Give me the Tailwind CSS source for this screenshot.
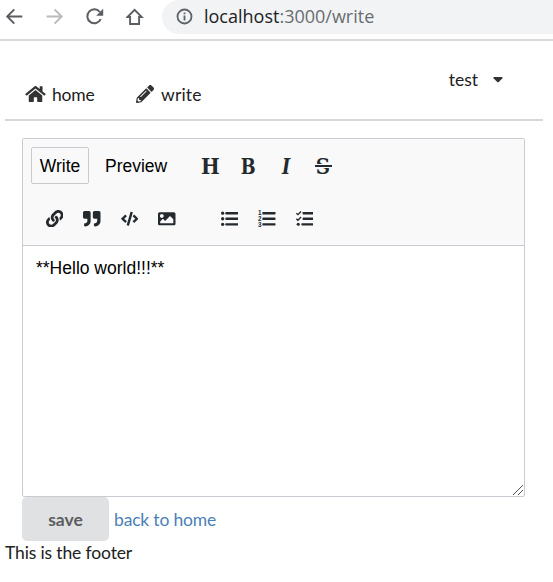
<!DOCTYPE html>
<html lang="en">
<head>
<meta charset="utf-8">
<title>write</title>
<script src="https://cdn.jsdelivr.net/npm/@tailwindcss/browser@4"></script>
</head>
<body class="bg-white w-[553px] h-[582px] overflow-hidden font-[Lato,sans-serif] text-[17.5px] leading-[25px] text-[#212121]">
<div class="flex h-[41px] items-start border-b-2 border-[#d9dadb]">
  <div class="flex w-[162px] shrink-0 h-[33px] text-[#5a5d61]">
    <svg class="w-[18px] h-[18px] mt-2 ml-[5px]" viewBox="0 0 18 18" fill="none" stroke="currentColor" stroke-width="1.9"><path d="M17.3 8.5H2.5M9.3 1.3L2.2 8.5l7.1 7.2"/></svg>
    <svg class="w-[18px] h-[18px] mt-2 ml-[23px] text-[#b9babc]" viewBox="0 0 18 18" fill="none" stroke="currentColor" stroke-width="1.9"><path d="M.6 8.5h14.8M8.6 1.3l7.1 7.2-7.1 7.2"/></svg>
    <svg class="w-[20px] h-[18px] mt-2 ml-[21px]" viewBox="0 0 20 18" fill="none" stroke="currentColor" stroke-width="2"><path d="M15.7 11.2a7 7 0 1 1-.9-7.2"/><path d="M18.2.8v7h-7z" fill="currentColor" stroke="none"/></svg>
    <svg class="w-[18px] h-[18px] mt-2 ml-[21px]" viewBox="0 0 18 18" fill="none" stroke="currentColor" stroke-width="1.9"><path d="M1.5 9L8.6 1.8 15.700 9h-2.600v7H4.100V9z"/></svg>
  </div>
  <div class="flex h-[34px] grow items-start rounded-l-full bg-[#f1f3f4]">
    <svg class="w-[17px] h-[17px] mt-2 ml-[14px] text-[#5f6368]" viewBox="0 0 17 17" fill="none" stroke="currentColor" stroke-width="1.8"><circle cx="8.5" cy="8.5" r="7"/><path d="M8.5 7.4v5M8.5 4.4v1.8"/></svg>
    <div class="ml-[11px] mt-[4px] whitespace-nowrap font-['Open_Sans',sans-serif] text-[18px] text-[#6a6d71]"><span class="text-[#202124]">localhost</span>:3000/write</div>
  </div>
</div>
<div class="ml-[5px] flex h-[80px] w-[538px] border-b-[2px] border-[#d6d7d8]">
  <div class="ml-[20px] mt-[41px] flex h-[25px] w-[110px]">
    <svg class="w-[21px] h-[18px] mt-[3px] text-[#333]" viewBox="0 0 576 512" fill="currentColor"><path d="M280 148L96 300v164c0 9 7 16 16 16h112c9 0 16-7 16-16v-97c0-9 7-16 16-16h64c9 0 16 7 16 16v97c0 9 7 16 16 16h112c9 0 16-7 16-16V300L296 148c-5-4-11-4-16 0zm292 103l-84-69V44c0-7-5-12-12-12h-56c-7 0-12 5-12 12v72l-90-74c-18-15-43-15-61 0L4 251c-5 4-6 12-1 17l25 31c5 5 12 6 17 2l235-194c5-4 11-4 16 0l236 194c5 4 12 3 17-2l25-31c4-5 3-13-2-17z"/></svg>
    <span class="ml-[6px] tracking-[-0.2px]">home</span>
  </div>
  <div class="mt-[41px] flex h-[25px] w-[120px]">
    <svg class="ml-px w-[18px] h-[18px] mt-[3px] text-[#333]" viewBox="0 0 512 512" fill="currentColor"><path fill-rule="evenodd" d="M498 142l-47 47c-4 4-12 4-16 0L324 78c-5-5-5-12 0-17l47-47c18-18 49-18 68 0l60 60c18 18 18 49-1 68zM284 101L22 364 0 485c-3 16 11 30 27 27l122-21 262-263c5-5 5-12 0-17L301 101c-5-5-12-5-17 0zM124 340c-5-5-5-13 0-18l154-154c5-5 13-5 18 0s5 13 0 18L142 340c-5 5-13 5-18 0zM88 424h48v36l-64 11-31-31 11-64h36z"/></svg>
    <span class="ml-[7px] tracking-[0.15px]">write</span>
  </div>
  <div class="ml-auto mr-[40px] mt-[26px] flex h-[25px]"><span>test</span>
    <svg class="ml-[15px] mt-[10px] w-[10px] h-[6px]" viewBox="0 0 10 6" fill="#333"><path d="M1 0h8q1 .3.4 1.2L5.8 5q-.8.7-1.6 0L.6 1.200Q0 .3 1 0z"/></svg>
  </div>
</div>
<div class="ml-[22px] mt-[17px] w-[503px] h-[359px] rounded-[2px] border border-[#c8ccd0] font-['Liberation_Sans',sans-serif]">
  <div class="h-[107px] border-b border-[#c8ccd0] bg-[#f9f9f9] text-[#24292e]">
    <div class="flex h-[53px] pt-[8px] pl-[8px]">
      <div class="flex h-[37px] w-[58px] items-center justify-center rounded-[2px] border border-[#c8ccd0] pt-[2px] text-[17.5px] text-black">Write</div>
      <div class="ml-[16px] flex h-[37px] w-[63px] items-center whitespace-nowrap pt-[2px] text-[17.5px] text-black">Preview</div>
      <div class="ml-[24px] flex h-[37px] items-center pt-px font-['DejaVu_Serif',serif] text-[22px] font-bold">
        <span class="flex w-[37.5px] justify-center"><span class="inline-block scale-x-90">H</span></span>
        <span class="flex w-[37.5px] justify-center"><span class="inline-block scale-x-80">B</span></span>
        <span class="flex w-[37.5px] justify-center"><span class="inline-block scale-x-80 italic">I</span></span>
        <span class="relative flex w-[37.5px] justify-center"><span class="inline-block scale-x-90">S</span><span class="absolute left-[10px] top-[10.5px] h-[4px] w-[17px] border-y border-[#f9f9f9] bg-[#24292e]"></span></span>
      </div>
    </div>
    <div class="flex h-[53px] items-start pl-[22.5px] pt-[17.5px]">
      <svg class="size-[17.5px]" viewBox="0 0 512 512" fill="currentColor"><path d="M326.612 185.391c59.747 59.809 58.927 155.698.36 214.590-.11.120-.24.250-.36.370l-67.200 67.200c-59.270 59.270-155.699 59.262-214.960 0-59.270-59.260-59.270-155.700 0-214.960l37.106-37.106c9.840-9.840 26.786-3.300 27.294 10.606.648 17.722 3.826 35.527 9.690 52.721 1.986 5.822.567 12.262-3.783 16.612l-13.087 13.087c-28.026 28.026-28.905 73.660-1.155 101.960 28.024 28.579 74.086 28.749 102.325.510l67.200-67.190c28.191-28.191 28.073-73.757 0-101.830-3.701-3.694-7.429-6.564-10.341-8.569a16.037 16.037 0 0 1-6.947-12.606c-.396-10.567 3.348-21.456 11.698-29.806l21.054-21.055c5.521-5.521 14.182-6.199 20.584-1.731a152.482 152.482 0 0 1 20.522 17.197zM467.547 44.449c-59.261-59.262-155.690-59.270-214.960 0l-67.200 67.200c-.120.120-.250.250-.360.370-58.566 58.892-59.387 154.781.360 214.590a152.454 152.454 0 0 0 20.521 17.196c6.402 4.468 15.064 3.789 20.584-1.731l21.054-21.055c8.350-8.350 12.094-19.239 11.698-29.806a16.037 16.037 0 0 0-6.947-12.606c-2.912-2.005-6.640-4.875-10.341-8.569-28.073-28.073-28.191-73.639 0-101.830l67.200-67.190c28.239-28.239 74.300-28.069 102.325.510 27.750 28.300 26.872 73.934-1.155 101.960l-13.087 13.087c-4.350 4.350-5.769 10.790-3.783 16.612 5.864 17.194 9.042 34.999 9.690 52.721.509 13.906 17.454 20.446 27.294 10.606l37.106-37.106c59.271-59.259 59.271-155.699.001-214.959z"/></svg>
      <svg class="ml-[20px] size-[17.5px]" viewBox="0 0 512 512" fill="currentColor"><path d="M464 32H336c-26.500 0-48 21.500-48 48v128c0 26.500 21.500 48 48 48h80v64c0 35.300-28.700 64-64 64h-8c-13.300 0-24 10.700-24 24v48c0 13.300 10.700 24 24 24h8c88.400 0 160-71.600 160-160V80c0-26.500-21.500-48-48-48zm-288 0H48C21.500 32 0 53.500 0 80v128c0 26.500 21.500 48 48 48h80v64c0 35.300-28.700 64-64 64h-8c-13.300 0-24 10.700-24 24v48c0 13.300 10.700 24 24 24h8c88.400 0 160-71.600 160-160V80c0-26.500-21.500-48-48-48z"/></svg>
      <svg class="ml-[20px] size-[17.5px]" viewBox="0 0 640 512" fill="currentColor"><path d="M278.900 511.500l-61-17.700c-6.400-1.800-10-8.500-8.200-14.900L346.200 8.700c1.800-6.400 8.500-10 14.900-8.200l61 17.700c6.400 1.800 10 8.500 8.200 14.900L293.800 503.300c-1.900 6.400-8.500 10.100-14.900 8.200zm-114-112.200l43.500-46.400c4.600-4.900 4.300-12.700-.8-17.200L117 256l90.600-79.700c5.100-4.500 5.500-12.300.8-17.200l-43.500-46.400c-4.500-4.800-12.100-5.100-17-.5L3.800 247.200c-5.100 4.700-5.100 12.800 0 17.500l144.100 135.100c4.900 4.600 12.500 4.400 17-.5zm327.200.6l144.100-135.100c5.100-4.700 5.100-12.800 0-17.500L492.100 112.100c-4.800-4.500-12.400-4.300-17 .5L431.600 159c-4.600 4.900-4.300 12.700.8 17.200L523 256l-90.600 79.700c-5.100 4.500-5.500 12.300-.8 17.200l43.500 46.400c4.500 4.900 12.100 5.100 17 .6z"/></svg>
      <svg class="ml-[20px] size-[17.5px]" viewBox="0 0 512 512" fill="currentColor"><path d="M464 448H48c-26.510 0-48-21.490-48-48V112c0-26.510 21.490-48 48-48h416c26.510 0 48 21.490 48 48v288c0 26.510-21.490 48-48 48zM112 120c-30.928 0-56 25.072-56 56s25.072 56 56 56 56-25.072 56-56-25.072-56-56-56zM64 384h384V272l-87.515-87.515c-4.686-4.686-12.284-4.686-16.971 0L208 320l-55.515-55.515c-4.686-4.686-12.284-4.686-16.971 0L64 336v48z"/></svg>
      <svg class="ml-[45px] size-[17.5px]" viewBox="0 0 18 18" fill="currentColor"><circle cx="1.700" cy="3.300" r="1.700"/><circle cx="1.700" cy="9" r="1.700"/><circle cx="1.700" cy="14.700" r="1.700"/><rect x="4.500" y="2.100" width="13.500" height="2.500" rx=".5"/><rect x="4.500" y="7.800" width="13.500" height="2.500" rx=".5"/><rect x="4.500" y="13.500" width="13.500" height="2.500" rx=".5"/></svg>
      <svg class="ml-[20px] size-[17.5px]" viewBox="0 0 18 18" fill="currentColor"><g font-family="Liberation Sans" font-weight="bold" font-size="6.5"><text x="0" y="5.5">1</text><text x="0" y="11.3">2</text><text x="0" y="17">3</text></g><rect x="4.500" y="2.100" width="13.500" height="2.500" rx=".5"/><rect x="4.500" y="7.800" width="13.500" height="2.500" rx=".5"/><rect x="4.500" y="13.500" width="13.500" height="2.500" rx=".5"/></svg>
      <svg class="ml-[20px] size-[17.5px]" viewBox="0 0 18 18" fill="currentColor"><path d="M.4 3.300l1.600 1.500L5.200 1.500M.4 9.100L2 10.600l3.200-3.300" fill="none" stroke="currentColor" stroke-width="1.4"/><circle cx="2.300" cy="14.700" r="1.600"/><rect x="6.800" y="2.100" width="11.200" height="2.500" rx=".5"/><rect x="6.800" y="7.800" width="11.200" height="2.500" rx=".5"/><rect x="5.600" y="13.500" width="12.400" height="2.500" rx=".5"/></svg>
    </div>
  </div>
  <div class="relative h-[250px] pl-[13px] pt-[10px] text-[17.5px] leading-[24px] text-black">**Hello world!!!**
    <svg class="absolute bottom-0 right-0 size-[12px]" viewBox="0 0 12 12" stroke="#555" stroke-width="1"><path d="M1 11L11 1M6 11l5-5"/></svg>
  </div>
</div>
<div class="ml-[22px] flex h-[44px]">
  <div class="flex h-[44px] w-[87px] items-center justify-center rounded-[5px] bg-[#e0e1e2] font-bold text-[#5c5d5e]">save</div>
  <div class="ml-[5px] mt-[10px] tracking-[-0.17px] text-[#4b7fb8]">back to home</div>
</div>
<div class="ml-[5px] mt-[-1px] tracking-[-0.14px]">This is the footer</div>
</body>
</html>
